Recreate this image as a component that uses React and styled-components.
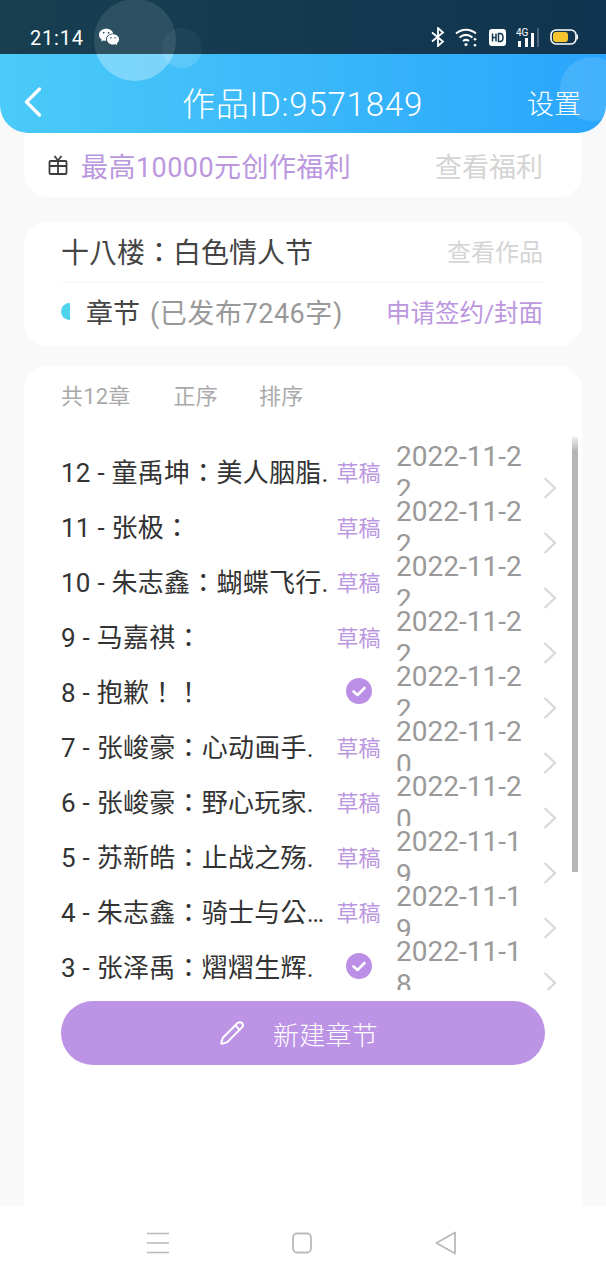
import React from "react";
import styled, { createGlobalStyle } from "styled-components";
import { Pencil } from "lucide-react";
import { RiWechatFill } from "react-icons/ri";

const GlobalStyle = createGlobalStyle`
  html, body { margin: 0; padding: 0; background: #f9f9f9; }
  * { box-sizing: border-box; }
`;

const FONT = `Roboto, "Noto Sans CJK SC", sans-serif`;
// the TC face centres the full-width colon and exclamation mark, as the titles show them
const TITLE_FONT = `Roboto, "Noto Sans CJK TC", sans-serif`;
const PURPLE = "#bb97e0";

const Page = styled.div`
  width: 606px;
  height: 1280px;
  display: flex;
  flex-direction: column;
  overflow: hidden;
  background: #f9f9f9;
  font-family: ${FONT};
`;

const Top = styled.div`
  position: relative;
  z-index: 2;
  flex: none;
  overflow: hidden;
  border-radius: 0 0 28px 28px;
`;

const StatusBar = styled.div`
  height: 54px;
  display: flex;
  align-items: center;
  padding: 20px 28px 0 30px;
  background: linear-gradient(90deg, #173f50, #10344f);
  color: #fff;
`;

const Time = styled.span`
  font-size: 20px;
  font-weight: 400;
  letter-spacing: 0.8px;
  margin-right: 14px;
  padding-top: 1px;
`;

const StatusIcons = styled.div`
  margin-left: auto;
  display: flex;
  align-items: center;
  gap: 10px;
`;

const Header = styled.div`
  height: 79px;
  display: flex;
  align-items: center;
  justify-content: space-between;
  padding: 17px 25px 0 24px;
  background: linear-gradient(90deg, #4bcbf8, #29a5fc);
  color: #fff;
`;

const Title = styled.div`
  font-size: 33px;
  letter-spacing: 0.8px;
  font-weight: 300;
  margin-left: 36px;
`;

const HeaderAction = styled.div`
  font-size: 27px;
  font-weight: 300;
`;

const Bubble = styled.div`
  position: absolute;
  left: ${(p) => p.$x}px;
  top: ${(p) => p.$y}px;
  width: ${(p) => p.$size}px;
  height: ${(p) => p.$size}px;
  border-radius: 50%;
  background: linear-gradient(
    180deg,
    rgba(255, 255, 255, ${(p) => p.$dark}) ${(p) => p.$stop}%,
    rgba(255, 255, 255, ${(p) => p.$light}) ${(p) => p.$stop}%
  );
`;

const Body = styled.div`
  flex: 1;
  min-height: 0;
  display: flex;
  flex-direction: column;
  gap: 20px;
  padding: 0 24px;
`;

const Card = styled.div`
  background: #fff;
  border-radius: 24px;
`;

const PromoCard = styled(Card)`
  margin-top: -20px;
  height: 84px;
  padding: 20px 39px 0 24px;
  display: flex;
  align-items: center;
  gap: 13px;
  font-size: 27px;
  flex: none;
`;

const PromoText = styled.span`
  color: ${PURPLE};
  flex: 1;
  letter-spacing: 0.45px;
`;

const MutedLink = styled.span`
  color: #d4d4d4;
  font-size: ${(p) => p.$size || 27}px;
`;

const WorkCard = styled(Card)`
  height: 124px;
  padding: 0 39px 0 37px;
  flex: none;
  margin-top: 5px;
`;

const WorkRow = styled.div`
  height: ${(p) => p.$h}px;
  display: flex;
  align-items: center;
  justify-content: space-between;
  padding-bottom: ${(p) => p.$pad}px;
  border-bottom: ${(p) => (p.$line ? "1px solid #f4f4f4" : "none")};
`;

const WorkName = styled.div`
  font-family: ${TITLE_FONT};
  font-size: 28px;
  color: #444;
`;

const ChapterLabel = styled.div`
  display: flex;
  align-items: center;
  font-size: 27px;
  color: #444;
`;

const HalfDot = styled.i`
  width: 9px;
  height: 17px;
  border-radius: 9px 0 0 9px;
  background: #4fd2ee;
  margin-right: 16px;
`;

const Published = styled.span`
  color: #999;
  margin-left: 10px;
  letter-spacing: 0.55px;
`;

const SignLink = styled.span`
  color: ${PURPLE};
  font-size: 24.5px;
`;

const ListCard = styled(Card)`
  flex: 1;
  min-height: 0;
  border-radius: 24px 24px 0 0;
  display: flex;
  flex-direction: column;
`;

const ListTabs = styled.div`
  height: 70px;
  flex: none;
  display: flex;
  align-items: center;
  padding: 0 0 14px 37px;
  font-size: 22px;
  letter-spacing: 0.2px;
  color: #aaa;
`;

const Tab = styled.span`
  margin-right: ${(p) => p.$gap || 0}px;
`;

const ListClip = styled.div`
  position: relative;
  height: 554px;
  flex: none;
  overflow: hidden;
`;

const ScrollThumb = styled.div`
  position: absolute;
  z-index: 3;
  right: 4px;
  top: 1px;
  width: 6px;
  height: 435px;
  background: linear-gradient(180deg, #eee 0, #b6b6b6 14px);
`;

const Row = styled.div`
  height: 55px;
  display: flex;
  align-items: center;
  padding-left: 38px;
  position: relative;
  top: 7px;
`;

const RowTitle = styled.div`
  width: 270px;
  flex: none;
  font-family: ${TITLE_FONT};
  font-size: 26px;
  letter-spacing: 0.25px;
  color: #333;
  white-space: nowrap;
  overflow: hidden;
  text-overflow: ellipsis;
  margin-left: -1px;
  margin-right: 1px;
`;

const RowState = styled.div`
  width: 64px;
  flex: none;
  display: flex;
  justify-content: center;
  padding-right: 11px;
  font-size: 22px;
  color: ${PURPLE};
`;

const RowDate = styled.div`
  width: 130px;
  height: 56px;
  flex: none;
  align-self: flex-start;
  margin-top: -3px;
  overflow: hidden;
  font-size: 28px;
  color: #999;
  word-break: break-all;
`;

const RowArrow = styled.div`
  margin-left: 17px;
  margin-top: 35px;
  display: flex;
`;

const NewButton = styled.button`
  flex: none;
  width: 484px;
  height: 64px;
  margin: 11px 0 0 37px;
  border: none;
  border-radius: 32px;
  background: #bd93e6;
  color: #fff;
  font-family: ${FONT};
  font-size: 26px;
  font-weight: 300;
  letter-spacing: 0.3px;
  display: flex;
  align-items: center;
  justify-content: center;
  gap: 28px;
  padding: 0 9px 0 0;
`;

const NavBar = styled.div`
  flex: none;
  height: 74px;
  background: #fff;
  display: flex;
  align-items: center;
  padding-left: 147px;
  gap: 123px;
  color: #b9b9b9;
`;

const BackIcon = () => (
  <svg width="18" height="30" viewBox="0 0 18 30" fill="none" stroke="#fff" strokeWidth="3.2" strokeLinecap="round" strokeLinejoin="round">
    <path d="M15.500 2 2.500 15l13 13" />
  </svg>
);

const RowChevron = () => (
  <svg width="14" height="22" viewBox="0 0 14 22" fill="none" stroke="#d8d8d8" strokeWidth="2.200">
    <path d="M1.500 1 12 11 1.500 21" />
  </svg>
);

const GiftIcon = () => (
  <svg width="20" height="22" viewBox="0 0 20 22" fill="none" stroke="#3d3d3d" strokeWidth="1.8">
    <rect x="1.500" y="7" width="17" height="13" rx="1" />
    <path d="M1.500 12h17M10 7v13M10 6.500 6.500 2M10 6.500 13.500 2" />
  </svg>
);

const CheckBadge = () => (
  <svg width="26" height="26" viewBox="0 0 26 26">
    <circle cx="13" cy="13" r="13" fill="#bb8fe6" />
    <path d="M7.500 13.500 11.500 17 18.500 10" fill="none" stroke="#fff" strokeWidth="2.6" strokeLinecap="round" strokeLinejoin="round" />
  </svg>
);

const BluetoothIcon = () => (
  <svg width="14" height="20" viewBox="0 0 14 20" fill="none" stroke="#fff" strokeWidth="1.8">
    <path d="M1 5.500 12 14.500 7 19V1l5 4.500L1 14.500" />
  </svg>
);

const WifiIcon = () => (
  <svg width="24" height="20" viewBox="0 0 24 20" fill="none" stroke="#fff" strokeWidth="2">
    <path d="M1 6.500C7 1.500 15 1.500 21 6.500M4.500 10.500c4-3.200 9-3.200 13 0M8 14c2-1.500 4-1.500 6 0" />
    <circle cx="11" cy="17.500" r="1.600" fill="#fff" stroke="none" />
    <path d="M20 11.500v2M18.700 12.800 20 11.400l1.300 1.400M20 19v-2M18.700 17.600 20 19l1.300-1.400" strokeWidth="1.200" />
  </svg>
);

const HdIcon = () => (
  <svg width="17" height="17" viewBox="0 0 17 17">
    <rect width="17" height="17" rx="3" fill="#fff" />
    <path d="M3.500 4.500v8M7 4.500v8M3.500 8.500H7M9.500 4.500v8h1.500c2 0 3-1.500 3-4s-1-4-3-4z" fill="none" stroke="#12364f" strokeWidth="1.500" />
  </svg>
);

const SignalIcon = () => (
  <svg width="24" height="20" viewBox="0 0 24 20">
    <text x="0" y="9" fontSize="10" fill="#fff" fontFamily="Roboto, sans-serif">4G</text>
    <rect x="2" y="14" width="3" height="6" fill="#fff" />
    <rect x="9" y="11" width="3" height="9" fill="#fff" />
    <rect x="15" y="6" width="3" height="14" fill="#fff" />
    <rect x="21" y="1" width="2" height="19" fill="#fff" opacity="0.25" />
  </svg>
);

const BatteryIcon = () => (
  <svg width="28" height="16" viewBox="0 0 28 16">
    <rect x="1" y="1" width="25" height="14" rx="5" fill="none" stroke="#fff" strokeWidth="1.600" />
    <rect x="3" y="3" width="15" height="10" rx="3" fill="#f4c52c" />
    <rect x="26.600" y="5.500" width="1.400" height="5" rx="0.700" fill="#fff" />
  </svg>
);

const MenuIcon = () => (
  <svg width="22" height="22" viewBox="0 0 22 22" stroke="currentColor" strokeWidth="1.600">
    <path d="M0 1.500h22M0 11h22M0 20.500h22" />
  </svg>
);

const SquareIcon = () => (
  <svg width="20" height="22" viewBox="0 0 20 22" fill="none" stroke="currentColor" strokeWidth="1.800">
    <rect x="1" y="1.500" width="18" height="19" rx="4" />
  </svg>
);

const TriangleIcon = () => (
  <svg width="22" height="24" viewBox="0 0 22 24" fill="none" stroke="currentColor" strokeWidth="1.800" strokeLinejoin="round">
    <path d="M20 1.500v21L1.500 12z" />
  </svg>
);

const chapters = [
  { title: "12 - 童禹坤：美人胭脂.", date: "2022-11-22" },
  { title: "11 - 张极：", date: "2022-11-22" },
  { title: "10 - 朱志鑫：蝴蝶飞行.", date: "2022-11-22" },
  { title: "9 - 马嘉祺：", date: "2022-11-22" },
  { title: "8 - 抱歉！！", date: "2022-11-22", done: true },
  { title: "7 - 张峻豪：心动画手.", date: "2022-11-20" },
  { title: "6 - 张峻豪：野心玩家.", date: "2022-11-20" },
  { title: "5 - 苏新皓：止战之殇.", date: "2022-11-19" },
  { title: "4 - 朱志鑫：骑士与公主的故事", date: "2022-11-19" },
  { title: "3 - 张泽禹：熠熠生辉.", date: "2022-11-18", done: true },
];

export default function App() {
  return (
    <Page>
      <GlobalStyle />
      <Top>
        <StatusBar>
          <Time>21:14</Time>
          <RiWechatFill size={22} />
          <StatusIcons>
            <BluetoothIcon />
            <WifiIcon />
            <HdIcon />
            <SignalIcon />
            <BatteryIcon />
          </StatusIcons>
        </StatusBar>
        <Header>
          <BackIcon />
          <Title>作品ID:9571849</Title>
          <HeaderAction>设置</HeaderAction>
        </Header>
        <Bubble $x={94} $y={-1} $size={82} $dark={0.1} $light={0.3} $stop={67} />
        <Bubble $x={162} $y={28} $size={40} $dark={0.04} $light={0.14} $stop={65} />
        <Bubble $x={560} $y={57} $size={64} $dark={0.1} $light={0.12} $stop={0} />
      </Top>
      <Body>
        <PromoCard>
          <GiftIcon />
          <PromoText>最高10000元创作福利</PromoText>
          <MutedLink>查看福利</MutedLink>
        </PromoCard>
        <WorkCard>
          <WorkRow $h={61} $pad={3} $line>
            <WorkName>十八楼：白色情人节</WorkName>
            <MutedLink $size={24}>查看作品</MutedLink>
          </WorkRow>
          <WorkRow $h={62} $pad={6}>
            <ChapterLabel>
              <HalfDot />
              章节
              <Published>(已发布7246字)</Published>
            </ChapterLabel>
            <SignLink>申请签约/封面</SignLink>
          </WorkRow>
        </WorkCard>
        <ListCard>
          <ListTabs>
            <Tab $gap={43}>共12章</Tab>
            <Tab $gap={41}>正序</Tab>
            <Tab>排序</Tab>
          </ListTabs>
          <ListClip>
            <ScrollThumb />
            {chapters.map((c) => (
              <Row key={c.title}>
                <RowTitle>{c.title}</RowTitle>
                <RowState>{c.done ? <CheckBadge /> : "草稿"}</RowState>
                <RowDate>{c.date}</RowDate>
                <RowArrow>
                  <RowChevron />
                </RowArrow>
              </Row>
            ))}
          </ListClip>
          <NewButton>
            <Pencil size={26} strokeWidth={1.8} />
            新建章节
          </NewButton>
        </ListCard>
      </Body>
      <NavBar>
        <MenuIcon />
        <SquareIcon />
        <TriangleIcon />
      </NavBar>
    </Page>
  );
}
